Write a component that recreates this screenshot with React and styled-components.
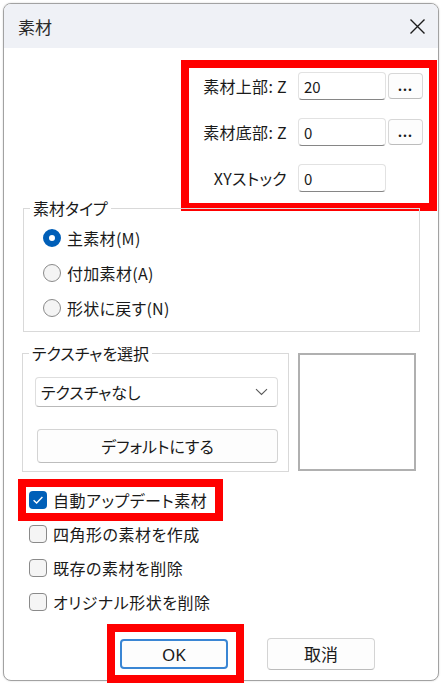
import styled, { createGlobalStyle, css } from "styled-components";

const RED = "#ff0000";
const ACCENT = "#005fb8";

const GlobalStyle = createGlobalStyle`
  html, body {
    margin: 0;
    padding: 0;
    background: #ffffff;
  }
  body {
    font-family: "Noto Sans CJK JP", "Noto Sans", sans-serif;
    font-feature-settings: "palt";
    color: #1a1a1a;
  }
  * {
    box-sizing: border-box;
  }
`;

// red annotation frame, drawn as an outline so it takes no room in the layout
const highlight = css`
  outline: 8px solid ${RED};
`;

const radioRows = [
  { label: "主素材(M)", checked: true },
  { label: "付加素材(A)", checked: false },
  { label: "形状に戻す(N)", checked: false },
];

const checkRows = [
  { label: "自動アップデート素材", checked: true, marked: true },
  { label: "四角形の素材を作成", checked: false },
  { label: "既存の素材を削除", checked: false },
  { label: "オリジナル形状を削除", checked: false },
];

export default function App() {
  return (
    <Page>
      <GlobalStyle />
      <Window>
        <TitleBar>
          <TitleText>素材</TitleText>
          <CloseIcon width="17" height="17" viewBox="0 0 17 17">
            <path d="M1.5 1.5 L15.5 15.5 M15.5 1.5 L1.5 15.5" stroke="#1c1c1c" strokeWidth="1.4" fill="none" />
          </CloseIcon>
        </TitleBar>

        <Body>
          <FieldsBox>
            <FieldLabel>素材上部: Z</FieldLabel>
            <TextInput defaultValue="20" readOnly />
            <DotsButton>...</DotsButton>

            <FieldLabel>素材底部: Z</FieldLabel>
            <TextInput defaultValue="0" readOnly />
            <DotsButton>...</DotsButton>

            <FieldLabel>XYストック</FieldLabel>
            <TextInput defaultValue="0" readOnly />
          </FieldsBox>

          <TypeGroup>
            <Legend>素材タイプ</Legend>
            <RadioList>
              {radioRows.map((row) => (
                <RadioRow key={row.label}>
                  <RadioMark $checked={row.checked} />
                  <span>{row.label}</span>
                </RadioRow>
              ))}
            </RadioList>
          </TypeGroup>

          <TextureRow>
            <TextureGroup>
              <Legend>テクスチャを選択</Legend>
              <TextureBody>
                <Select>
                  <span>テクスチャなし</span>
                  <svg width="13" height="8" viewBox="0 0 13 8">
                    <path d="M1 1.2 L6.5 6.5 L12 1.2" stroke="#5a5a5a" strokeWidth="1.1" fill="none" />
                  </svg>
                </Select>
                <DefaultButton>デフォルトにする</DefaultButton>
              </TextureBody>
            </TextureGroup>
            <Preview />
          </TextureRow>

          <CheckList>
            {checkRows.map((row) => (
              <CheckItem key={row.label}>
                <CheckLabel $marked={row.marked}>
                  <CheckMark $checked={row.checked}>
                    {row.checked && (
                      <svg width="18" height="18" viewBox="0 0 18 18">
                        <path d="M4.6 9.3 L7.6 12.1 L13.4 6.1" stroke="#ffffff" strokeWidth="1.4" fill="none" />
                      </svg>
                    )}
                  </CheckMark>
                  <span>{row.label}</span>
                </CheckLabel>
              </CheckItem>
            ))}
          </CheckList>

          <ButtonRow>
            <OkFrame>
              <DialogButton $primary>OK</DialogButton>
            </OkFrame>
            <DialogButton>取消</DialogButton>
          </ButtonRow>
        </Body>
      </Window>
    </Page>
  );
}

const Page = styled.div`
  padding: 3px;
`;

const Window = styled.div`
  width: 436px;
  height: 678px;
  display: flex;
  flex-direction: column;
  background: #ffffff;
  border: 1px solid #a2a2a2;
  border-radius: 8px;
  box-shadow: 0 0 2px rgba(0, 0, 0, 0.18);
`;

const TitleBar = styled.div`
  height: 44px;
  flex: none;
  display: flex;
  align-items: center;
  justify-content: space-between;
  padding: 0 12px 0 14px;
  background: #eff1f6;
  border-radius: 7px 7px 0 0;
`;

const TitleText = styled.span`
  font-size: 17px;
  color: #2a2a2a;
`;

const CloseIcon = styled.svg`
  display: block;
`;

const Body = styled.div`
  flex: 1;
  display: flex;
  flex-direction: column;
  align-items: flex-start;
`;

const FieldsBox = styled.div`
  ${highlight};
  margin: 20px 0 0 185px;
  width: 240px;
  padding: 4px 6px 11px 0;
  display: grid;
  grid-template-columns: 107px 88px 35px;
  grid-template-rows: repeat(3, 28px);
  column-gap: 2px;
  row-gap: 18px;
`;

const FieldLabel = styled.span`
  align-self: center;
  padding-right: 9px;
  text-align: right;
  white-space: nowrap;
  font-size: 16px;
  letter-spacing: 0.3px;
`;

const TextInput = styled.input`
  width: 88px;
  height: 28px;
  padding: 0 5px;
  border: 1px solid #e2e2e2;
  border-bottom-color: #868686;
  border-radius: 4px;
  background: #ffffff;
  font-family: inherit;
  font-size: 15px;
  color: #1a1a1a;
  outline: none;
`;

const DotsButton = styled.button`
  align-self: center;
  height: 26px;
  padding: 0 0 5px;
  border: 1px solid #d7d7d7;
  border-bottom-color: #bcbcbc;
  border-radius: 4px;
  background: #fdfdfd;
  font-family: "Noto Sans", sans-serif;
  font-size: 14px;
  font-weight: 700;
  letter-spacing: 1px;
  line-height: 1;
  color: #1a1a1a;
  display: flex;
  align-items: flex-end;
  justify-content: center;
`;

const Group = styled.fieldset`
  margin: 0;
  padding: 0;
  min-width: 0;
  border: 1px solid #d9d9d9;
`;

const Legend = styled.legend`
  margin-left: 6px;
  padding: 0 3px;
  font-size: 16px;
  line-height: 18px;
`;

const TypeGroup = styled(Group)`
  margin: -4px 0 0 19px;
  width: 397px;
`;

const RadioList = styled.div`
  padding: 3px 0 6px 19px;
  display: flex;
  flex-direction: column;
`;

const RadioRow = styled.label`
  height: 35px;
  display: flex;
  align-items: center;
  gap: 6px;
  font-size: 16px;
  letter-spacing: 0.3px;
`;

const RadioMark = styled.span`
  width: 18px;
  height: 18px;
  flex: none;
  border-radius: 50%;
  ${({ $checked }) =>
    $checked
      ? css`
          background: #ffffff;
          border: 6px solid ${ACCENT};
        `
      : css`
          background: #f4f4f4;
          border: 1px solid #8a8a8a;
        `}
`;

const TextureRow = styled.div`
  margin: 12px 0 0 18px;
  display: flex;
  align-items: flex-start;
  gap: 9px;
`;

const TextureGroup = styled(Group)`
  width: 267px;
`;

const TextureBody = styled.div`
  padding: 15px 10px 8px 12px;
`;

const Select = styled.div`
  width: 243px;
  height: 30px;
  padding: 0 9px 0 5px;
  display: flex;
  align-items: center;
  justify-content: space-between;
  border: 1px solid #dedede;
  border-bottom-color: #b9b9b9;
  border-radius: 4px;
  background: #ffffff;
  font-size: 16px;
`;

const DefaultButton = styled.button`
  display: block;
  margin: 22px 0 0 2px;
  width: 241px;
  height: 34px;
  border: 1px solid #d4d4d4;
  border-bottom-color: #bdbdbd;
  border-radius: 4px;
  background: #fdfdfd;
  font-family: inherit;
  font-feature-settings: "palt";
  font-size: 16px;
  color: #1a1a1a;
`;

const Preview = styled.div`
  margin-top: 9px;
  width: 118px;
  height: 118px;
  border: 2px solid #b0b0b0;
  background: #ffffff;
`;

const CheckList = styled.div`
  margin: 11px 0 0 22px;
  display: flex;
  flex-direction: column;
`;

const CheckItem = styled.div`
  height: 34px;
  display: flex;
  align-items: center;
`;

const CheckLabel = styled.label`
  height: 26px;
  padding: 0 8px 0 3px;
  display: inline-flex;
  align-items: center;
  gap: 6px;
  font-size: 16px;
  letter-spacing: 0.5px;
  ${({ $marked }) => $marked && highlight};
`;

const CheckMark = styled.span`
  width: 18px;
  height: 18px;
  flex: none;
  border-radius: 4px;
  display: flex;
  ${({ $checked }) =>
    $checked
      ? css`
          background: ${ACCENT};
        `
      : css`
          background: #f5f5f5;
          border: 1px solid #8a8a8a;
        `}
`;

const ButtonRow = styled.div`
  margin: 13px 0 0 111px;
  display: flex;
  align-items: center;
  gap: 31px;
`;

const OkFrame = styled.div`
  ${highlight};
  padding: 7px 8px 6px 5px;
`;

const DialogButton = styled.button`
  display: block;
  width: 108px;
  height: ${({ $primary }) => ($primary ? "30px" : "32px")};
  border-radius: 4px;
  background: #fdfdfd;
  font-family: "Noto Sans", "Noto Sans CJK JP", sans-serif;
  font-size: 17px;
  color: #1a1a1a;
  ${({ $primary }) =>
    $primary
      ? css`
          border: 2px solid #3a86d4;
        `
      : css`
          border: 1px solid #d4d4d4;
          border-bottom-color: #bcbcbc;
        `}
`;
